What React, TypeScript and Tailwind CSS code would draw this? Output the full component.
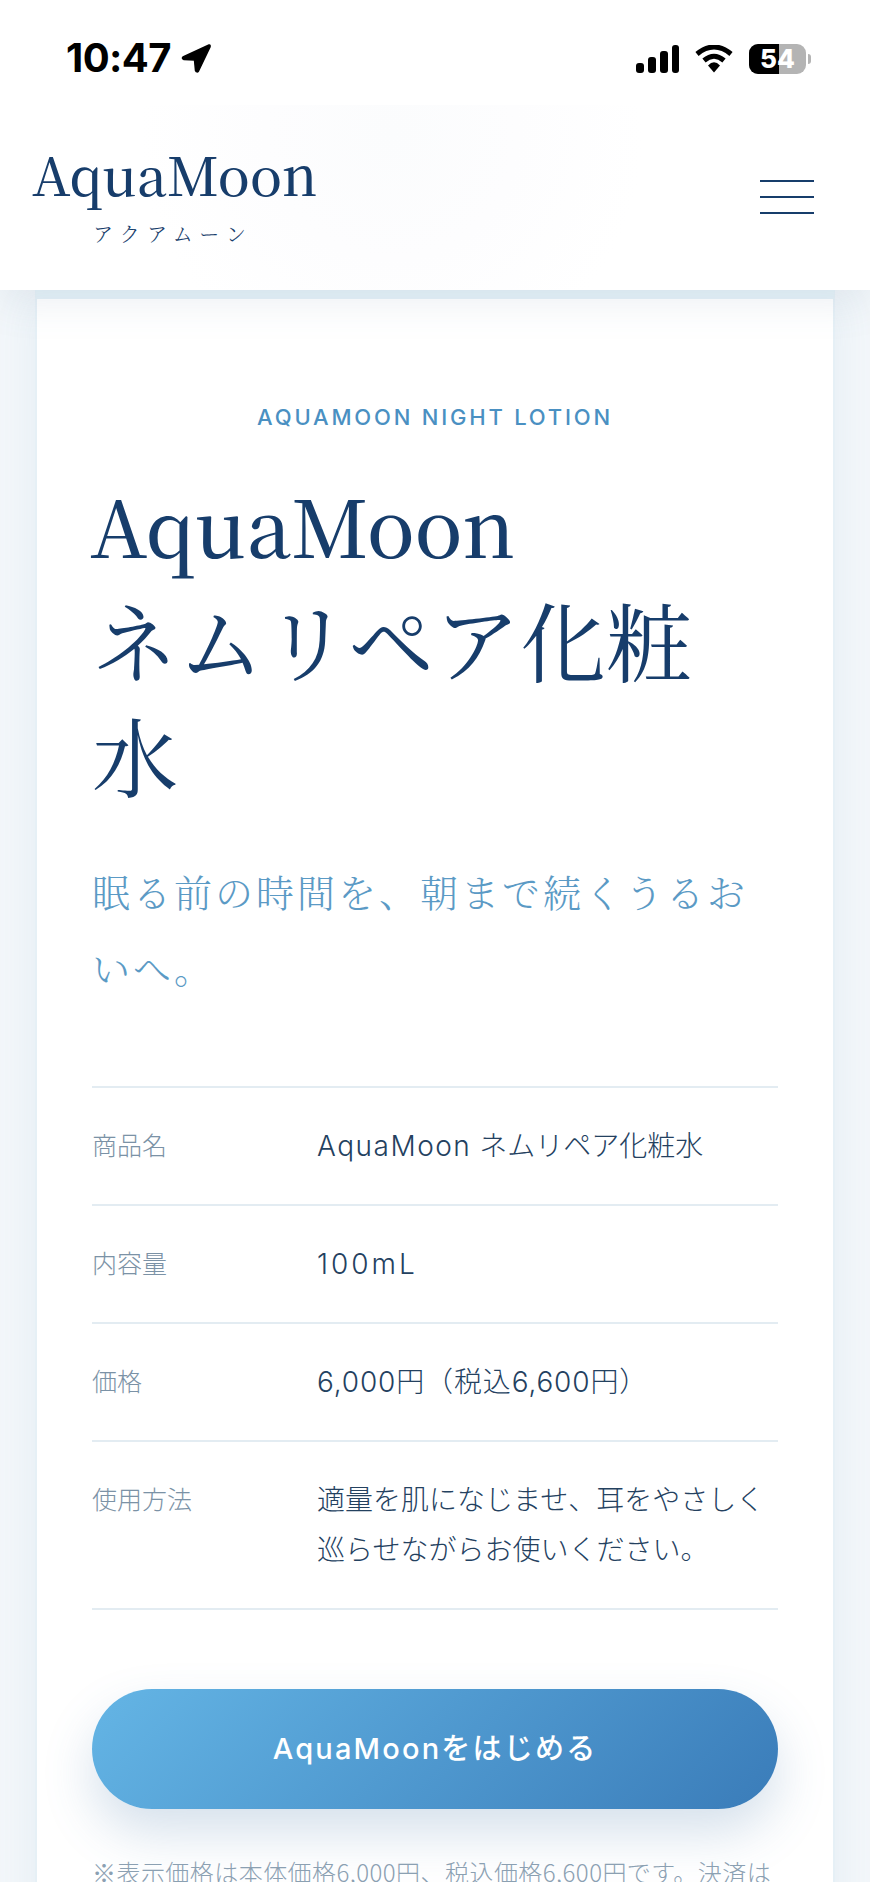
const sansJa = "font-['Inter','Noto_Sans_CJK_JP',sans-serif]";
const serifJa = "font-['Noto_Serif_CJK_JP','Noto_Sans_CJK_JP',serif]";

const specRows = [
  { label: "商品名", value: [<><span className="tracking-[1.5px]">AquaMoon</span> ネムリペア化粧水</>] },
  { label: "内容量", value: [<span className="tracking-[3px]">100mL</span>] },
  { label: "価格", value: [<span className="tracking-[0.85px]">6,000円（税込6,600円）</span>] },
  { label: "使用方法", value: ["適量を肌になじませ、耳をやさしく", "巡らせながらお使いください。"] },
];

function StatusBar() {
  return (
    <div className="relative z-20 flex h-[105px] items-start justify-between bg-white pt-[41px] pl-[66px] pr-[59px]">
      <div className="flex items-center gap-[9px]">
        <span className="font-['Inter',sans-serif] text-[40px] leading-[34px] font-bold tracking-[-0.6px] text-black">10:47</span>
        <svg width="32" height="32" viewBox="0 0 32 32">
          <path d="M29 3 L3 15 Q1.5 16.5 4 17.5 L14.5 18 L15.5 28.5 Q17 31 18.5 29 L30 5 Q30.5 2.5 29 3 Z" fill="#000" stroke="#000" strokeWidth="1.5" strokeLinejoin="round" />
        </svg>
      </div>
      <div className="flex items-center pt-[3px]">
        <svg width="44" height="28" viewBox="0 0 44 28" className="mr-[16px]">
          <rect x="1" y="18" width="8" height="10" rx="3" fill="#000" />
          <rect x="13" y="12" width="8" height="16" rx="3" fill="#000" />
          <rect x="25" y="6" width="8" height="22" rx="3" fill="#000" />
          <rect x="37" y="0" width="7" height="28" rx="3" fill="#000" />
        </svg>
        <svg width="38" height="28" viewBox="0 0 38 28" className="mr-[16px]">
          <path d="M2 9 Q19 -5 36 9" fill="none" stroke="#000" strokeWidth="5" />
          <path d="M9 15.5 Q19 7 29 15.5" fill="none" stroke="#000" strokeWidth="5" />
          <path d="M13 20.5 Q19 14 25 20.5 L19 27.5 Z" fill="#000" />
        </svg>
        <div className="relative flex h-[30px] w-[57px] overflow-hidden rounded-[9px] bg-[#b4b4b4]">
          <div className="h-full w-[30px] bg-black" />
          <span className="absolute inset-0 text-center font-['Inter',sans-serif] text-[26px] leading-[30px] font-extrabold text-white">54</span>
        </div>
        <div className="ml-[2px] h-[10px] w-[3px] rounded-r-full bg-[#b4b4b4]" />
      </div>
    </div>
  );
}

function SiteHeader() {
  return (
    <header className="relative z-10 flex h-[185px] items-start justify-between bg-white bg-[radial-gradient(circle_at_45%_15%,#fbfcfd_0%,#fdfdfe_25%,#ffffff_50%)] pl-[32px] pr-[56px] shadow-[0_10px_40px_rgba(90,125,155,0.13)]">
      <div className="flex flex-col items-center pt-[38px]">
        <span className={`${serifJa} text-[53px] leading-[60px] font-medium text-[#173d6b]`}>AquaMoon</span>
        <span className={`${serifJa} mt-[17px] pr-[3px] text-[20px] leading-[28px] font-light tracking-[7.3px] text-[#173d6b]`}>アクアムーン</span>
      </div>
      <div className="flex w-[54px] flex-col gap-[14px] pt-[75px]">
        <div className="h-[2px] bg-[#173d6b]" />
        <div className="h-[2px] bg-[#173d6b]" />
        <div className="h-[2px] bg-[#173d6b]" />
      </div>
    </header>
  );
}

export default function App() {
  return (
    <div className="h-[1882px] w-[870px] overflow-hidden bg-[#f3f7fa]">
      <StatusBar />
      <SiteHeader />
      <main className="px-[35px]">
        <section className="border-x-2 border-t-[9px] border-x-[#e6f0f6] border-t-[#e6f2f8] bg-white px-[55px] pt-[103px] pb-[100px] shadow-[0_10px_40px_rgba(100,150,190,0.1)]">
          <p className={`${sansJa} text-center text-[22px] leading-[30px] font-medium tracking-[2.8px] text-[#4a90c2]`}>AQUAMOON NIGHT LOTION</p>
          <h1 className={`${serifJa} mt-[32px] text-[86px] leading-[115px] text-[#173d6b]`}>
            <span className="-ml-[2px] text-[79px] font-medium">AquaMoon</span>
            <br />
            ネムリペア化粧
            <br />
            水
          </h1>
          <p className={`${serifJa} mt-[41px] text-[38px] leading-[76px] font-light tracking-[3px] text-[#5b9ac5]`}>
            眠る前の時間を、朝まで続くうるお
            <br />
            いへ。
          </p>
          <dl className="mt-[81px] border-t-2 border-[#e3ecf2]">
            {specRows.map((row) => (
              <div key={row.label} className="flex border-b-2 border-[#e3ecf2] py-[33px]">
                <dt className={`${sansJa} w-[225px] text-[25px] leading-[50px] font-light text-[#7b92a6]`}>{row.label}</dt>
                <dd className={`${sansJa} text-[28px] leading-[50px] font-light text-[#24415f]`}>
                  {row.value.map((line, i) => (
                    <div key={i}>{line}</div>
                  ))}
                </dd>
              </div>
            ))}
          </dl>
          <button className={`${sansJa} mt-[79px] h-[120px] w-full rounded-full bg-[linear-gradient(135deg,#64b5e5,#3a7cb9)] text-[29px] font-medium tracking-[2.2px] text-white shadow-[0_24px_50px_rgba(70,120,170,0.22)]`}>
            AquaMoonをはじめる
          </button>
          <p className="mt-[38px] whitespace-nowrap font-['Noto_Sans_CJK_JP',sans-serif] text-[24px] leading-[50px] font-light tracking-[0.45px] text-[#8ba0b2]">
            ※表示価格は本体価格6,000円、税込価格6,600円です。決済は
          </p>
        </section>
      </main>
    </div>
  );
}
